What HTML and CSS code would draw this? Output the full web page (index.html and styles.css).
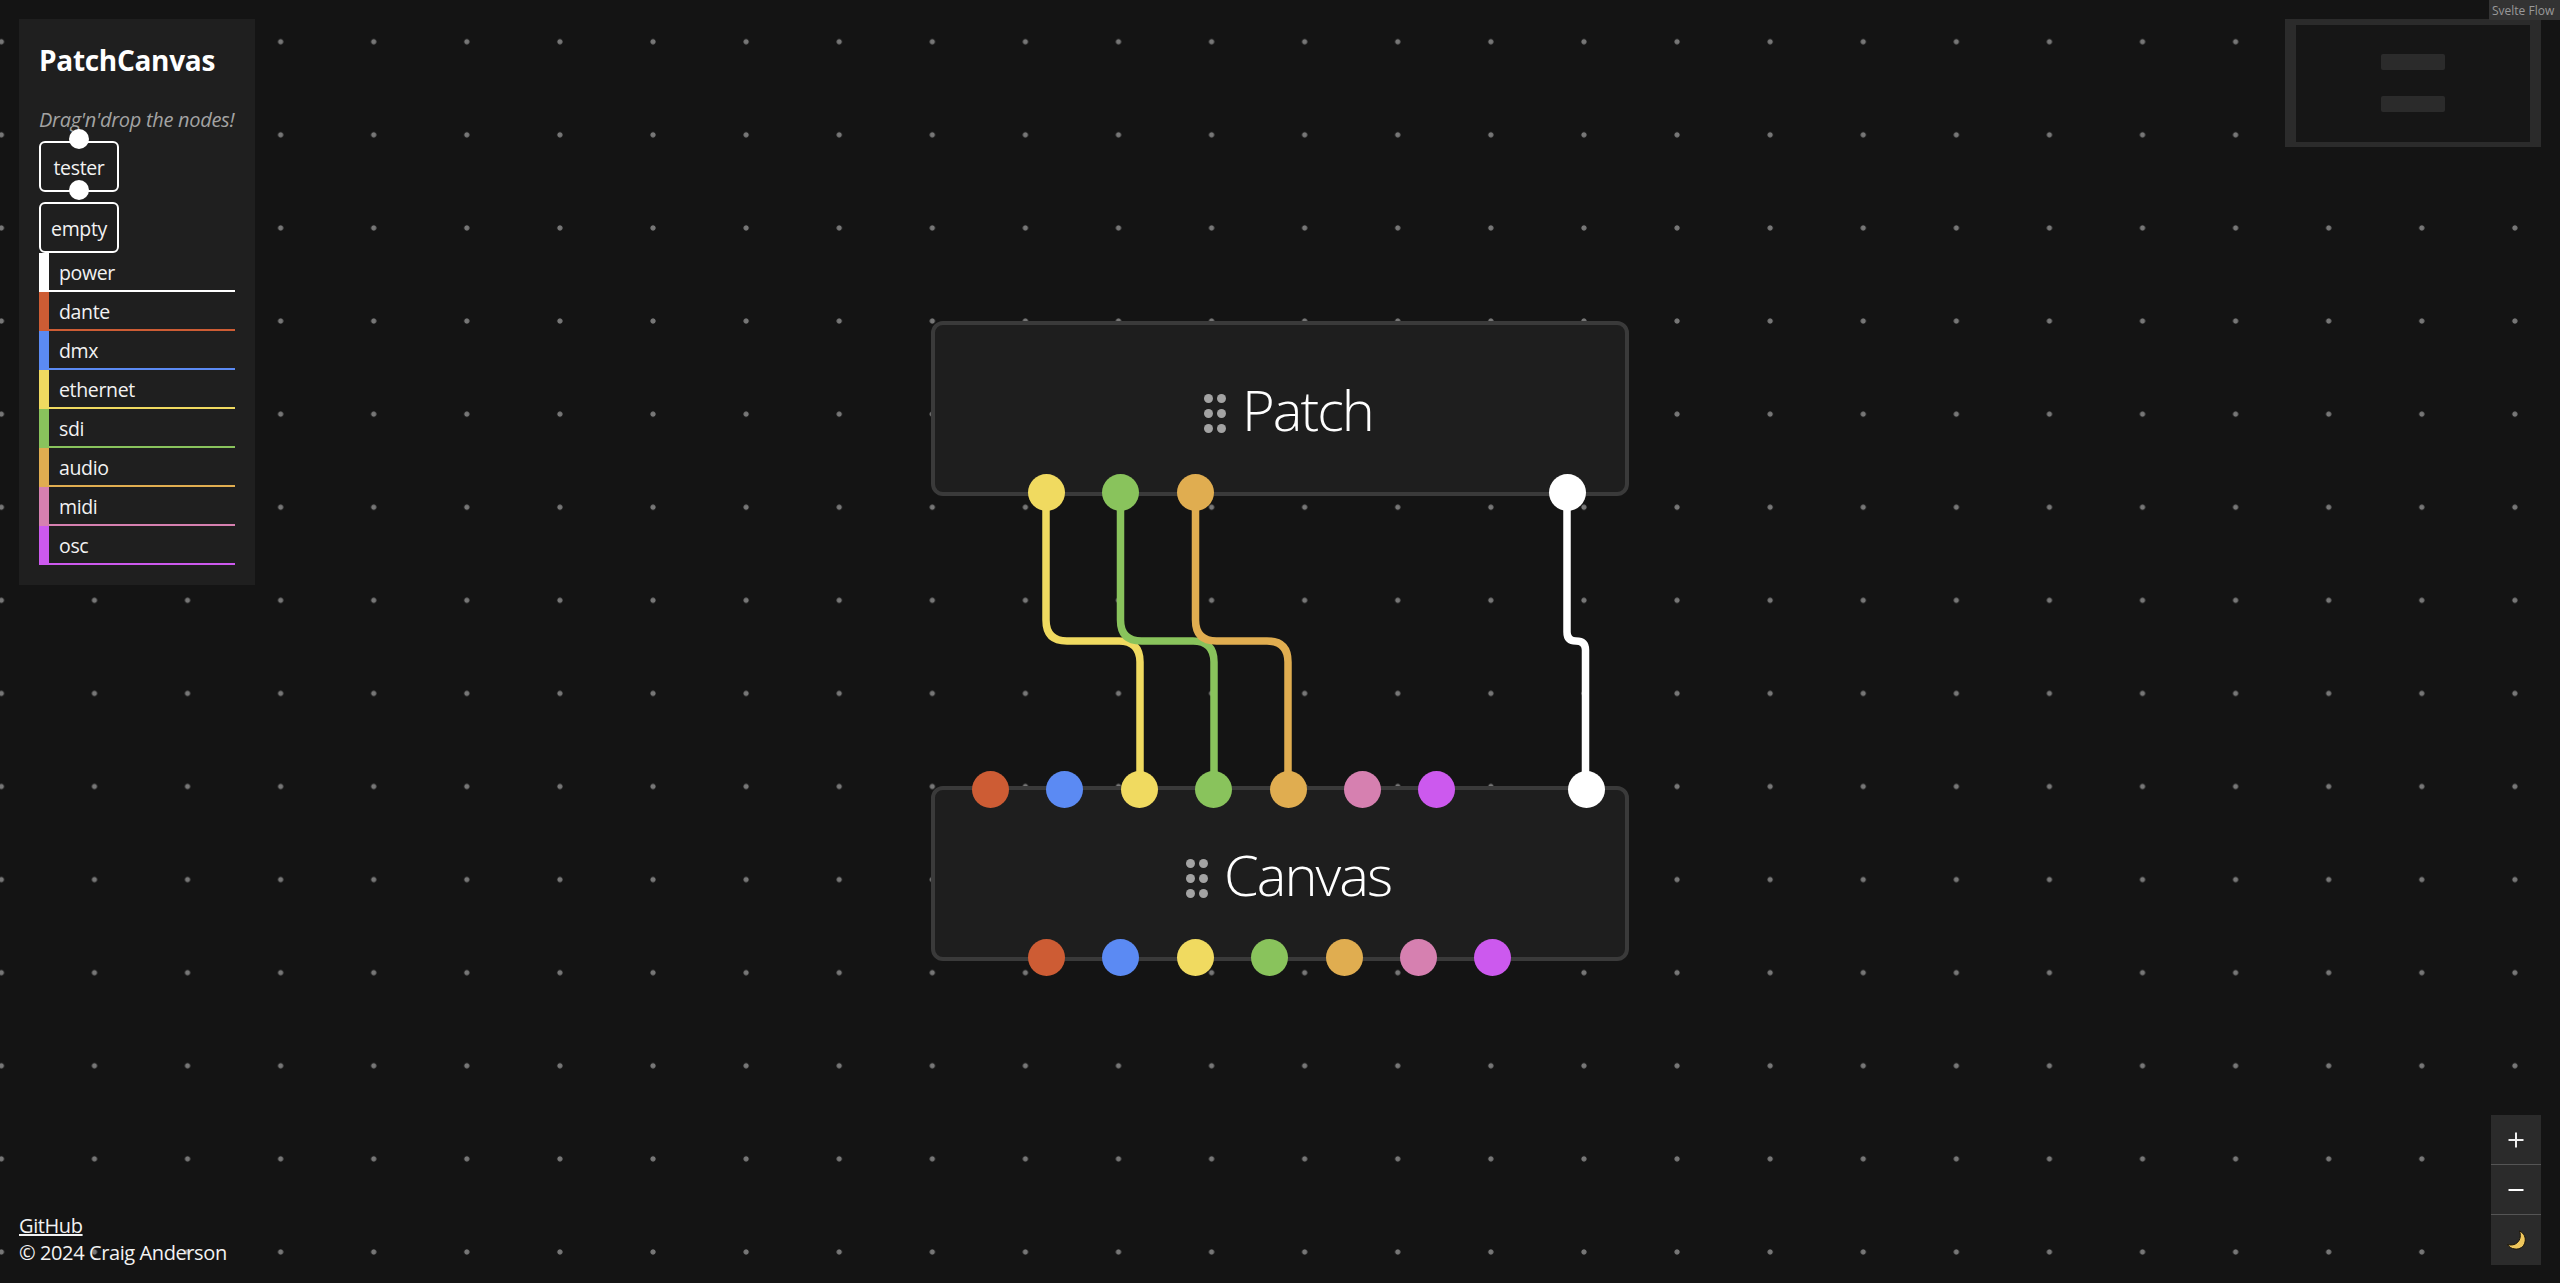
FILE: index.html
```html
<!DOCTYPE html>
<html lang="en">
<head>
    <meta charset="UTF-8">
    <meta name="viewport" content="width=device-width, initial-scale=1.0">
    <title>PatchCanvas</title>
    <link rel="stylesheet" href="styles.css">
</head>
<body>

<div class="flow">
    <!-- wires -->
    <svg class="wires" width="2560" height="1283" viewBox="0 0 2560 1283">
        <path class="wire wire-ethernet" d="M1046 500 L1046 620 Q1046 641 1067 641 L1119 641 Q1140 641 1140 662 L1140 780"/>
        <path class="wire wire-sdi" d="M1120.5 500 L1120.5 620 Q1120.5 641 1141.5 641 L1193 641 Q1214 641 1214 662 L1214 780"/>
        <path class="wire wire-audio" d="M1195.5 500 L1195.5 620 Q1195.5 641 1216.5 641 L1267 641 Q1288 641 1288 662 L1288 780"/>
        <path class="wire wire-power" d="M1567 500 L1567 632 Q1567 641 1576 641 Q1585.5 641 1585.5 650 L1585.5 780"/>
    </svg>

    <div class="node node-patch">
        <div class="node-title">
            <span class="grip"><i></i><i></i><i></i><i></i><i></i><i></i></span>
            <span>Patch</span>
        </div>
        <div class="handles handles-patch">
            <span class="handle ethernet"></span>
            <span class="handle sdi"></span>
            <span class="handle audio"></span>
            <span class="handle power push"></span>
        </div>
    </div>

    <div class="node node-canvas">
        <div class="handles handles-in">
            <span class="handle dante"></span>
            <span class="handle dmx"></span>
            <span class="handle ethernet"></span>
            <span class="handle sdi"></span>
            <span class="handle audio"></span>
            <span class="handle midi"></span>
            <span class="handle osc"></span>
            <span class="handle power push"></span>
        </div>
        <div class="node-title">
            <span class="grip"><i></i><i></i><i></i><i></i><i></i><i></i></span>
            <span>Canvas</span>
        </div>
        <div class="handles handles-out">
            <span class="handle dante"></span>
            <span class="handle dmx"></span>
            <span class="handle ethernet"></span>
            <span class="handle sdi"></span>
            <span class="handle audio"></span>
            <span class="handle midi"></span>
            <span class="handle osc"></span>
        </div>
    </div>
</div>

<aside class="sidebar">
    <h1>PatchCanvas</h1>
    <p class="hint">Drag'n'drop the nodes!</p>
    <div class="chip chip-tester">tester</div>
    <div class="chip">empty</div>
    <ul class="legend">
        <li class="power">power</li>
        <li class="dante">dante</li>
        <li class="dmx">dmx</li>
        <li class="ethernet">ethernet</li>
        <li class="sdi">sdi</li>
        <li class="audio">audio</li>
        <li class="midi">midi</li>
        <li class="osc">osc</li>
    </ul>
</aside>

<footer class="credits">
    <a href="#">GitHub</a>
    <div>© 2024 Craig Anderson</div>
</footer>

<div class="minimap">
    <div class="minimap-node"></div>
    <div class="minimap-node"></div>
</div>
<div class="attribution">Svelte Flow</div>

<div class="controls">
    <button type="button">
        <svg width="16" height="16" viewBox="0 0 16 16"><path d="M0.5 8 H15.5 M8 0.5 V15.5" stroke="#f0f0f0" stroke-width="2"/></svg>
    </button>
    <button type="button">
        <svg width="16" height="16" viewBox="0 0 16 16"><path d="M0.5 8 H15.5" stroke="#fff" stroke-width="2"/></svg>
    </button>
    <button type="button">
        <svg width="20" height="20" viewBox="0 0 20 20"><path d="M13.5 1 C18 3 20 7.5 19 12 C18 17 13.5 19.500 9 19 C5.500 18.700 3 17 1.500 14.500 C5 15.500 9 15 11.500 12.500 C14.500 9.500 15 5 13.500 1 Z" fill="#eec65c" stroke="#1a1408" stroke-width="1"/></svg>
    </button>
</div>

</body>
</html>
```

FILE: styles.css
```css
/* channel colours */
.power { --c: #ffffff; }
.dante { --c: #cd5c34; }
.dmx { --c: #5b8af3; }
.ethernet { --c: #f0da60; }
.sdi { --c: #89c35c; }
.audio { --c: #e0ad50; }
.midi { --c: #d680b0; }
.osc { --c: #cc59ee; }

* {
    box-sizing: border-box;
}

html,
body {
    margin: 0;
    height: 100%;
    overflow: hidden;
}

body {
    position: relative;
    background-color: #141414;
    color: #f2f2f2;
    font-family: "Open Sans", "Noto Sans", sans-serif;
}

/* canvas */
.flow {
    position: absolute;
    inset: 0;
    background-image: radial-gradient(circle, #777 2.2px, transparent 3px);
    background-size: 93.1px 93.1px;
    background-position: -45.2px -4.8px;
}

.wires {
    position: absolute;
    left: 0;
    top: 0;
}

.wire {
    fill: none;
    stroke-width: 7.5;
}

.wire-ethernet { stroke: #f0da60; }
.wire-sdi { stroke: #89c35c; }
.wire-audio { stroke: #e0ad50; }
.wire-power { stroke: #fff; }

.node {
    position: absolute;
    left: 931px;
    width: 698px;
    height: 175px;
    display: flex;
    align-items: center;
    justify-content: center;
    background-color: #1e1e1e;
    border: 4px solid #3a3a3a;
    border-radius: 12px;
}

.node-patch { top: 321px; }
.node-canvas { top: 786px; }

.node-title {
    display: flex;
    align-items: center;
    gap: 16px;
    padding-left: 17px;
    color: #fff;
    font-size: 56px;
    font-weight: 340;
    letter-spacing: -2px;
    line-height: 1;
}

.grip {
    display: grid;
    grid-template-columns: 9px 9px;
    column-gap: 4px;
    row-gap: 6px;
    margin-top: 10px;
}

.grip i {
    width: 9px;
    height: 9px;
    border-radius: 50%;
    background-color: #a3a3a3;
}

.handles {
    position: absolute;
    display: flex;
    gap: 37.4px;
}

.handles-patch {
    left: 93px;
    right: 39px;
    bottom: -19px;
}

.handles-in {
    left: 37px;
    right: 20px;
    top: -19px;
}

.handles-out {
    left: 93px;
    bottom: -19px;
}

.handle {
    width: 37px;
    height: 37px;
    flex: none;
    border-radius: 50%;
    background-color: var(--c);
}

.push {
    margin-left: auto;
}

/* sidebar */
.sidebar {
    position: absolute;
    left: 19px;
    top: 19px;
    width: 236px;
    height: 566px;
    padding: 20px;
    background-color: #1f1f1f;
}

.sidebar h1 {
    margin: 0;
    height: 42px;
    font-size: 28px;
    font-weight: 700;
    letter-spacing: -0.3px;
    line-height: 42px;
    color: #fff;
}

.hint {
    margin: 24px 0 0;
    height: 36px;
    font-size: 20px;
    font-style: italic;
    letter-spacing: -0.3px;
    line-height: 30px;
    white-space: nowrap;
    color: #a3a3a3;
}

.chip {
    position: relative;
    width: 80px;
    height: 51px;
    display: flex;
    align-items: center;
    justify-content: center;
    margin-bottom: 10px;
    padding-top: 2px;
    border: 2px solid #fff;
    border-radius: 6px;
    font-size: 19.5px;
    letter-spacing: -0.35px;
}

.chip:last-of-type {
    margin-bottom: 0;
}

.chip-tester::before,
.chip-tester::after {
    content: "";
    position: absolute;
    left: 28px;
    width: 20px;
    height: 20px;
    border-radius: 50%;
    background-color: #fff;
}

.chip-tester::before { top: -14px; }
.chip-tester::after { bottom: -10px; }

.legend {
    margin: 0;
    padding: 0;
    list-style: none;
}

.legend li {
    height: 39px;
    padding-left: 10px;
    border-left: 10px solid var(--c);
    border-bottom: 2px solid var(--c);
    font-size: 19.5px;
    letter-spacing: -0.35px;
    line-height: 39px;
}

/* footer */
.credits {
    position: absolute;
    left: 19px;
    top: 1212px;
    font-size: 20px;
    letter-spacing: -0.4px;
    line-height: 27px;
}

.credits a {
    color: inherit;
}

/* minimap */
.minimap {
    position: absolute;
    left: 2285px;
    top: 19px;
    width: 256px;
    height: 128px;
    display: flex;
    flex-direction: column;
    align-items: center;
    gap: 26px;
    padding: 29px 0 0 0;
    background-color: #161616;
    border: solid #2b2b2b;
    border-width: 6px 11px 5px;
}

.minimap-node {
    width: 64px;
    height: 16px;
    border-radius: 2px;
    background-color: #2b2b2b;
}

.attribution {
    position: absolute;
    right: 0;
    top: 0;
    width: 71px;
    height: 20px;
    padding-left: 3px;
    background-color: #333;
    color: #999;
    font-size: 12px;
    line-height: 22px;
    white-space: nowrap;
}

/* zoom controls */
.controls {
    position: absolute;
    left: 2491px;
    top: 1115px;
    width: 50px;
    display: flex;
    flex-direction: column;
}

.controls button {
    width: 50px;
    height: 50px;
    display: flex;
    align-items: center;
    justify-content: center;
    padding: 0;
    background-color: #2b2b2b;
    border: none;
    border-bottom: 1px solid #555;
}

.controls button:last-child {
    border-bottom: none;
}
```
